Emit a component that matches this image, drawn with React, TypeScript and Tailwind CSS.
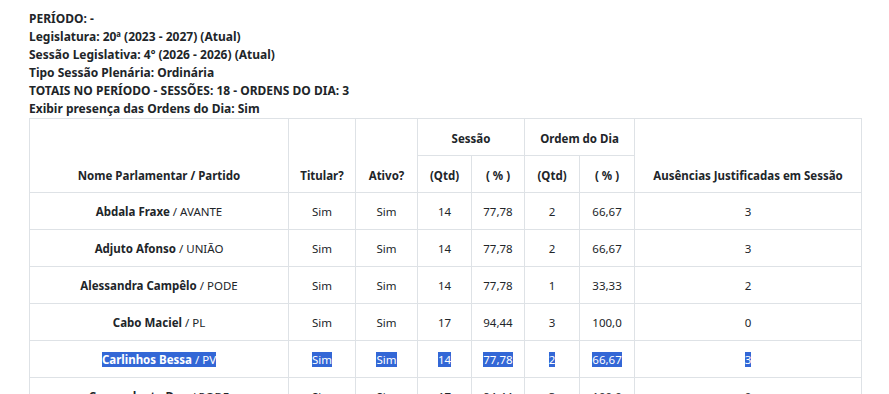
const info = [
  'PERÍODO: -',
  'Legislatura: 20ª (2023 - 2027) (Atual)',
  'Sessão Legislativa: 4º (2026 - 2026) (Atual)',
  'Tipo Sessão Plenária: Ordinária',
  'TOTAIS NO PERÍODO - SESSÕES: 18 - ORDENS DO DIA: 3',
  'Exibir presença das Ordens do Dia: Sim',
];

type Row = {
  nome: string;
  partido: string;
  titular: string;
  ativo: string;
  sQtd: string;
  sPct: string;
  oQtd: string;
  oPct: string;
  ausencias: string;
  selected?: boolean;
};

const rows: Row[] = [
  { nome: 'Abdala Fraxe', partido: 'AVANTE', titular: 'Sim', ativo: 'Sim', sQtd: '14', sPct: '77,78', oQtd: '2', oPct: '66,67', ausencias: '3' },
  { nome: 'Adjuto Afonso', partido: 'UNIÃO', titular: 'Sim', ativo: 'Sim', sQtd: '14', sPct: '77,78', oQtd: '2', oPct: '66,67', ausencias: '3' },
  { nome: 'Alessandra Campêlo', partido: 'PODE', titular: 'Sim', ativo: 'Sim', sQtd: '14', sPct: '77,78', oQtd: '1', oPct: '33,33', ausencias: '2' },
  { nome: 'Cabo Maciel', partido: 'PL', titular: 'Sim', ativo: 'Sim', sQtd: '17', sPct: '94,44', oQtd: '3', oPct: '100,0', ausencias: '0' },
  { nome: 'Carlinhos Bessa', partido: 'PV', titular: 'Sim', ativo: 'Sim', sQtd: '14', sPct: '77,78', oQtd: '2', oPct: '66,67', ausencias: '3', selected: true },
  { nome: 'Comandante Dan', partido: 'PODE', titular: 'Sim', ativo: 'Sim', sQtd: '17', sPct: '94,44', oQtd: '3', oPct: '100,0', ausencias: '0' },
];

function Cell({ children, selected }: { children: React.ReactNode; selected?: boolean }) {
  return (
    <td className="border border-[#dee2e6] px-2 pt-[10px] pb-[8px] text-center align-middle leading-[18px]">
      {selected ? <span className="bg-[#3367d6] text-white">{children}</span> : children}
    </td>
  );
}

export default function App() {
  const th = 'border border-[#dee2e6] px-2 pt-[11px] pb-[7px] text-center align-bottom font-bold leading-[18px]';
  return (
    <div className="min-h-screen bg-white pl-[29px] pt-[10px] text-[12px] text-[#212529] font-['Noto_Sans',sans-serif]">
      <div className="font-bold leading-[18px]">
        {info.map((line) => (
          <div key={line}>{line}</div>
        ))}
      </div>
      <table className="w-[832px] table-fixed border-collapse text-[11.5px]">
        <colgroup>
          <col className="w-[259px]" />
          <col className="w-[67px]" />
          <col className="w-[62px]" />
          <col className="w-[54px]" />
          <col className="w-[53px]" />
          <col className="w-[55px]" />
          <col className="w-[55px]" />
          <col className="w-[227px]" />
        </colgroup>
        <thead>
          <tr>
            <th rowSpan={2} className={th}>Nome Parlamentar / Partido</th>
            <th rowSpan={2} className={th}>Titular?</th>
            <th rowSpan={2} className={th}>Ativo?</th>
            <th colSpan={2} className={th}>Sessão</th>
            <th colSpan={2} className={th}>Ordem do Dia</th>
            <th rowSpan={2} className={th}>Ausências Justificadas em Sessão</th>
          </tr>
          <tr>
            <th className={th}>(Qtd)</th>
            <th className={th}>( % )</th>
            <th className={th}>(Qtd)</th>
            <th className={th}>( % )</th>
          </tr>
        </thead>
        <tbody>
          {rows.map((r) => (
            <tr key={r.nome}>
              <Cell>
                {r.selected ? (
                  <span className="bg-[#3367d6] text-white">
                    <b>{r.nome}</b> / {r.partido}
                  </span>
                ) : (
                  <>
                    <b>{r.nome}</b> / {r.partido}
                  </>
                )}
              </Cell>
              <Cell selected={r.selected}>{r.titular}</Cell>
              <Cell selected={r.selected}>{r.ativo}</Cell>
              <Cell selected={r.selected}>{r.sQtd}</Cell>
              <Cell selected={r.selected}>{r.sPct}</Cell>
              <Cell selected={r.selected}>{r.oQtd}</Cell>
              <Cell selected={r.selected}>{r.oPct}</Cell>
              <Cell selected={r.selected}>{r.ausencias}</Cell>
            </tr>
          ))}
        </tbody>
      </table>
    </div>
  );
}
